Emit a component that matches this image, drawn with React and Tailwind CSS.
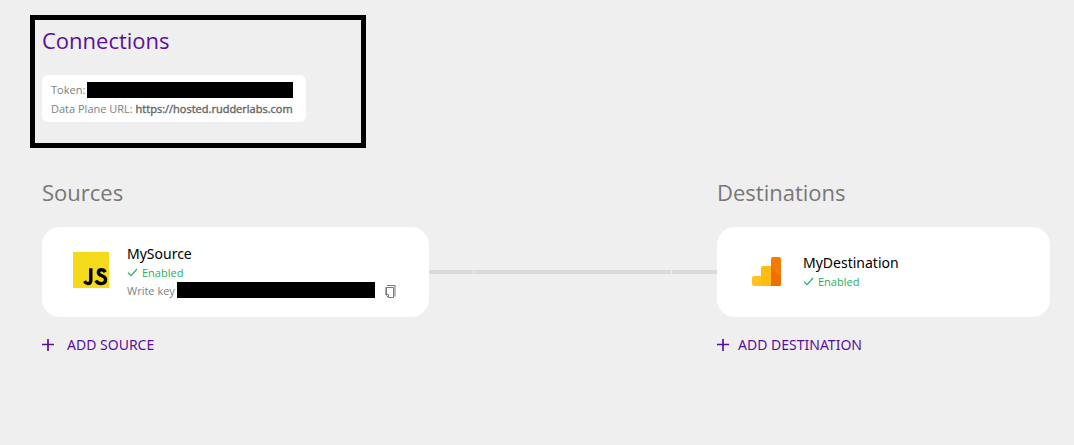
import React from "react";

function JsLogo() {
  return (
    <svg className="size-9 shrink-0" viewBox="0 0 36 36" role="img" aria-label="JavaScript">
      <rect width="36" height="36" fill="#f5da1c" />
      <g fill="none" stroke="#000" strokeWidth="3.4">
        <path d="M17.800 16.300v11.700c0 2.600-1.100 3.600-3 3.600-1.500 0-2.400-.9-3.300-2.400" />
        <path d="M32.200 20.100c-.9-1.600-2-2.300-3.700-2.300-1.900 0-3.100 1-3.100 2.600 0 4 7.200 2.700 7.200 7.200 0 2.600-1.900 4-4.500 4-2.500 0-4.200-1-5.200-3" />
      </g>
    </svg>
  );
}

function AnalyticsLogo() {
  return (
    <svg className="h-[30px] w-[30px] shrink-0" viewBox="0 0 30 30" role="img" aria-label="Google Analytics">
      <path d="M2 19h8v10H2a2 2 0 0 1-2-2v-6a2 2 0 0 1 2-2z" fill="#ffc21f" />
      <path d="M9 19v-8a2 2 0 0 1 2-2h8v20H9z" fill="#ffbc14" />
      <path d="M19 2a2 2 0 0 1 2-2h6a2 2 0 0 1 2 2v25a2 2 0 0 1-2 2h-8z" fill="#f57c00" />
      <path d="M19 10l10 10v7a2 2 0 0 1-2 2h-8z" fill="#ee6f02" />
    </svg>
  );
}

function CheckIcon() {
  return (
    <svg className="h-[10px] w-[11px]" viewBox="0 0 11 10" fill="none" stroke="currentColor" strokeWidth="1.2" aria-hidden="true">
      <path d="M1 4.700l3 3L10 1" />
    </svg>
  );
}

function PlusIcon() {
  return (
    <svg className="size-3" viewBox="0 0 12 12" fill="none" stroke="currentColor" strokeWidth="1.7" aria-hidden="true">
      <path d="M6 0v12M0 5.500h12" />
    </svg>
  );
}

function CopyIcon() {
  return (
    <svg className="h-[13px] w-[11px]" viewBox="0 0 11 13" fill="none" aria-hidden="true">
      <path d="M2 .5h8.500" stroke="#777" />
      <path d="M10 1v10.500" stroke="#bbb" strokeWidth="2" />
      <path d="M1.500 2.500h7v10H3.500l-2-2z" fill="#fff" stroke="#777" />
      <path d="M1.500 9.500h2v3" stroke="#777" />
      <path d="M.5 2v8" stroke="#aaa" />
    </svg>
  );
}

function Enabled() {
  return (
    <p className="flex items-center gap-1 font-['Open_Sans','Noto_Sans',sans-serif] text-[11px] leading-[18px] text-[#27ae60]">
      <CheckIcon />
      Enabled
    </p>
  );
}

function AddButton({ children, className }) {
  return (
    <button type="button" className={`flex items-center justify-self-start text-sm leading-5 text-[#5b0f9b] ${className}`}>
      <PlusIcon />
      {children}
    </button>
  );
}

export default function App() {
  return (
    <main className="min-h-screen bg-[#efefef] pt-[15px] pr-6 pb-8 pl-[30px] font-['Noto_Sans',sans-serif] text-black">
      <section className="w-84 max-w-full border-5 border-black px-[7px] pt-[5px] pb-[21px]">
        <h1 className="font-['Open_Sans','Noto_Sans',sans-serif] text-[22px] leading-[30px] text-[#5b0f9b]">Connections</h1>
        <div className="mt-5 w-66 max-w-full rounded-md bg-white px-[9px] pt-[5px] pb-1 font-['Open_Sans','Noto_Sans',sans-serif] text-[11px] leading-[19px] text-[#808080]">
          <div className="flex items-center gap-0.5">
            <span>Token:</span>
            <span className="mr-1 h-4 flex-1 bg-black" />
          </div>
          <p>
            Data Plane URL: <span className="text-[#696969] [-webkit-text-stroke:0.4px]">https://hosted.rudderlabs.com</span>
          </p>
        </div>
      </section>

      <div className="mt-[29px] ml-3 grid grid-cols-[387fr_288fr_333fr] items-center">
        <h2 className="font-['Open_Sans','Noto_Sans',sans-serif] text-[22px] leading-[30px] text-[#777777]">Sources</h2>
        <h2 className="col-start-3 font-['Open_Sans','Noto_Sans',sans-serif] text-[22px] leading-[30px] text-[#777777]">Destinations</h2>

        <article className="mt-5 flex h-[90px] items-center gap-[18px] rounded-[18px] bg-white pr-[33px] pl-[31px]">
          <div className="pb-1">
            <JsLogo />
          </div>
          <div className="min-w-0 flex-1">
            <h3 className="text-sm leading-5">MySource</h3>
            <Enabled />
            <div className="flex items-center font-['Open_Sans','Noto_Sans',sans-serif] text-[11px] leading-[18px] text-[#808080]">
              <span>Write key</span>
              <span className="ml-0.5 h-4 flex-1 self-start bg-black" />
              <button type="button" aria-label="Copy write key" className="ml-2.5">
                <CopyIcon />
              </button>
            </div>
          </div>
        </article>
        <div className="mt-5 flex h-1 gap-px" aria-hidden="true">
          <span className="w-11 bg-[#dadada]" />
          <span className="flex-1 bg-[#dadada]" />
          <span className="w-[45px] bg-[#dadada]" />
        </div>
        <article className="mt-5 flex h-[90px] items-center gap-[21px] rounded-[18px] bg-white px-[35px]">
          <AnalyticsLogo />
          <div>
            <h3 className="text-sm leading-5">MyDestination</h3>
            <Enabled />
          </div>
        </article>

        <AddButton className="mt-[18px] gap-[13px]">ADD SOURCE</AddButton>
        <AddButton className="col-start-3 mt-[18px] gap-[9px]">ADD DESTINATION</AddButton>
      </div>
    </main>
  );
}
